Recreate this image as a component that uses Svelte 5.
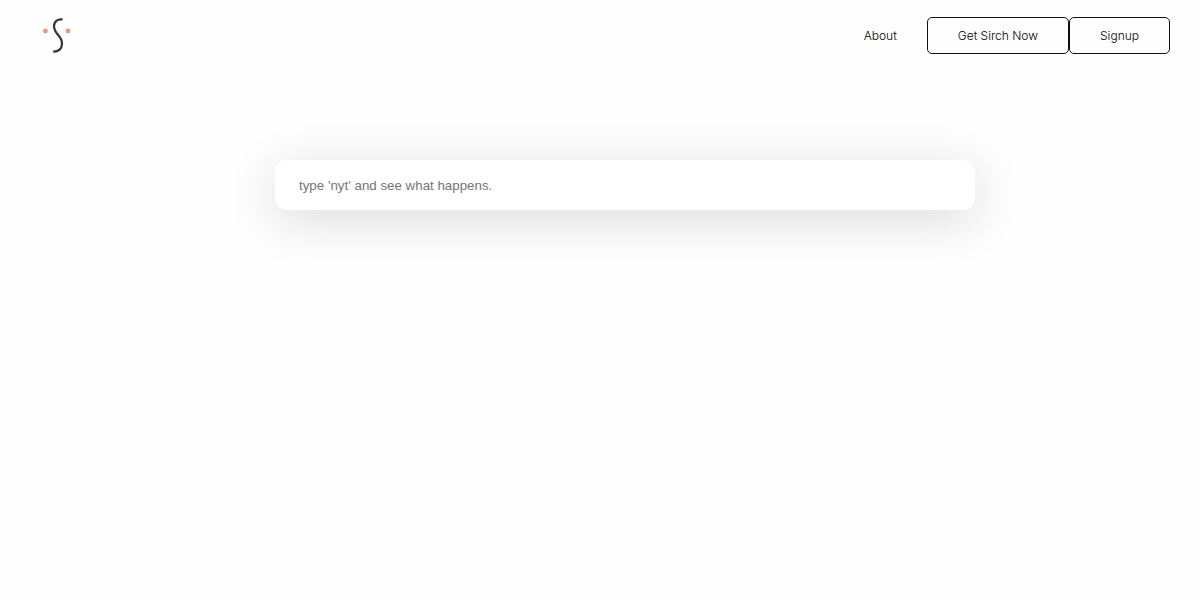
<script lang="ts">
  let query = $state('');

  const buttons = [
    { label: 'Get Sirch Now', href: '#get' },
    { label: 'Signup', href: '#signup' },
  ];
</script>

<header>
  <a class="logo" href="#home" aria-label="Sirch home">
    <svg width="42" height="46" viewBox="0 0 42 46" fill="none">
      <path
        d="M26.6 7.4C21.4 6.8 18 9.4 18 14.2C18 22.2 26 23.2 26 31.4C26 36.8 22.6 39.8 17.2 39.6"
        stroke="#333"
        stroke-width="2.2"
      />
      <circle cx="9.4" cy="19" r="2.4" fill="#ee9588" />
      <circle cx="32" cy="19" r="2.4" fill="#ee9588" />
    </svg>
  </a>

  <nav>
    <a class="link" href="#about">About</a>
    {#each buttons as button}
      <a class="button" href={button.href}>{button.label}</a>
    {/each}
  </nav>
</header>

<main>
  <form onsubmit={(e) => e.preventDefault()}>
    <input
      type="text"
      aria-label="Search"
      placeholder="type 'nyt' and see what happens."
      autocomplete="off"
      bind:value={query}
    />
  </form>
</main>

<style>
  :global(body) {
    margin: 0;
    background: #fefefe;
    color: #111;
    font-family: Inter, sans-serif;
  }

  header {
    display: flex;
    justify-content: space-between;
    align-items: center;
    padding: 12px 30px 12px 36px;
  }

  .logo svg {
    display: block;
  }

  nav {
    display: flex;
    align-items: center;
    font-size: 12px;
    font-weight: 350;
    line-height: 15px;
  }

  nav a {
    color: #000;
    text-decoration: none;
  }

  .link {
    margin-right: 30px;
  }

  .button {
    padding: 10px 30px;
    border: 1px solid #111;
    border-radius: 5px;
  }

  main {
    padding: 90px 0 90px 50px;
  }

  form {
    max-width: 700px;
    margin: 0 auto;
  }

  input {
    display: block;
    box-sizing: border-box;
    width: 100%;
    height: 50px;
    padding: 0 24px;
    border: none;
    border-radius: 12px;
    outline: none;
    background: #fff;
    box-shadow: 0 10px 50px rgba(0, 0, 0, 0.14);
  }

  input::placeholder {
    color: #757575;
  }
</style>
